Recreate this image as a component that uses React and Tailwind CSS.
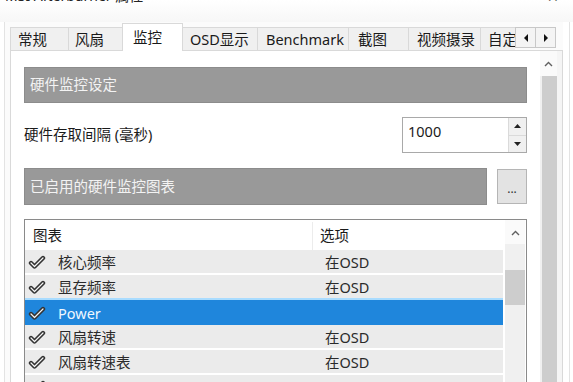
import React from "react";

function Check() {
  return (
    <svg width="18" height="15" viewBox="0 0 18 15" className="shrink-0">
      <path d="M3 8 L6.5 11.5 L15 3" fill="none" stroke="#333" strokeWidth="4.4" strokeLinecap="round" strokeLinejoin="round" />
      <path d="M3 8 L6.5 11.5 L15 3" fill="none" stroke="#f4f4f4" strokeWidth="1.2" strokeLinecap="round" strokeLinejoin="round" />
    </svg>
  );
}

function UpChevron() {
  return (
    <svg width="9" height="6" viewBox="0 0 9 6">
      <polyline points="1,5 4.5,1.5 8,5" fill="none" stroke="#606060" strokeWidth="1.4" />
    </svg>
  );
}

const tabs = [
  { t: "常规", w: "w-[59px]", p: "pl-[7px]" },
  { t: "风扇", w: "w-[55px]", p: "pl-[6px]" },
  { t: "监控", w: "w-[61px]", p: "pl-[10px]", sel: true },
  { t: "OSD显示", w: "w-[76px]", p: "pl-[7px]" },
  { t: "Benchmark", w: "w-[92px]", p: "pl-[8px]" },
  { t: "截图", w: "w-[61px]", p: "pl-[9px]" },
  { t: "视频摄录", w: "w-[73px]", p: "pl-[8px]" },
  { t: "自定义", w: "w-[60px]", p: "pl-[7px]" },
];

const rows = [
  { name: "核心频率", opt: "在OSD" },
  { name: "显存频率", opt: "在OSD" },
  { name: "Power", opt: "", sel: true },
  { name: "风扇转速", opt: "在OSD" },
  { name: "风扇转速表", opt: "在OSD" },
  { name: "", opt: "" },
];

export default function App() {
  return (
    <div className="w-[573px] h-[382px] overflow-hidden bg-white flex flex-col font-['Noto_Sans','Noto_Sans_CJK_SC',sans-serif] text-[#1a1a1a]">
      {/* title bar (cut off at top) */}
      <div className="h-[22px] shrink-0 flex justify-between bg-gradient-to-b from-white to-[#f7f7f7]">
        <div className="-mt-[12px] ml-[5px] text-[14px] leading-[16px] text-[#222]">MSI Afterburner 属性</div>
        <div className="-mt-[11px] mr-[14px] text-[14px] leading-[16px] text-[#333]">✕</div>
      </div>

      <div className="flex-1 flex min-h-0">
        <div className="ml-[4px] w-[6px] border-l border-[#e3e3e3] bg-[#fbfbfb]" />
        <div className="w-[553px] flex flex-col min-h-0">
          {/* tab strip */}
          <div className="h-[29px] shrink-0 flex items-end bg-[#fbfbfb]">
            <div className="w-[505px] h-full flex items-end overflow-hidden">
              {tabs.map((tab, i) =>
                tab.sel ? (
                  <div
                    key={i}
                    className={`${tab.w} ${tab.p} shrink-0 h-[28px] -ml-px bg-white border-x border-t border-[#d9d9d9] pt-[3px] text-[14.5px] leading-[20px] relative z-10`}
                  >
                    {tab.t}
                  </div>
                ) : (
                  <div
                    key={i}
                    className={`${tab.w} ${tab.p} shrink-0 h-[24px] ${i === 0 ? "" : "-ml-px"} bg-[#f0f0f0] border border-[#d9d9d9] pt-[1px] text-[14.5px] leading-[20px] whitespace-nowrap`}
                  >
                    {tab.t}
                  </div>
                )
              )}
            </div>
            <div className="flex-1 h-full border-b border-[#d9d9d9] flex items-start pt-[5px]">
              <div className="flex">
                <div className="w-[21px] h-[21px] bg-[#f4f4f4] border border-[#c8c8c8] flex items-center justify-center">
                  <svg width="6" height="8" viewBox="0 0 6 8"><polygon points="5,0 5,8 1,4" fill="#111" /></svg>
                </div>
                <div className="w-[21px] h-[21px] -ml-px bg-[#f4f4f4] border border-[#c8c8c8] flex items-center justify-center">
                  <svg width="6" height="8" viewBox="0 0 6 8"><polygon points="1,0 1,8 5,4" fill="#111" /></svg>
                </div>
              </div>
            </div>
          </div>

          {/* tab panel */}
          <div className="flex-1 min-h-0 flex border-x border-[#d9d9d9] bg-[#f5f5f5]">
            <div className="w-[529px] bg-white px-[13px] pt-[16px] flex flex-col min-h-0">
              <div className="h-[36px] shrink-0 bg-[#999999] border border-[#8c8c8c] flex items-center pl-[5px] text-[14.5px] text-[#f3f3f3]">
                硬件监控设定
              </div>

              <div className="mt-[14px] h-[36px] shrink-0 flex items-center justify-between">
                <div className="text-[14.5px]">硬件存取间隔 (毫秒)</div>
                <div className="w-[125px] h-[36px] border border-[#a9a9a9] flex bg-white">
                  <div className="flex-1 pl-[5px] pt-[3px] text-[14.5px] leading-[20px]">1000</div>
                  <div className="w-[18px] flex flex-col border-l border-[#dadada]">
                    <div className="flex-1 bg-[#f0f0f0] flex items-center justify-center border-b border-[#dadada]">
                      <svg width="7" height="4" viewBox="0 0 7 4"><polygon points="0,4 7,4 3.5,0" fill="#222" /></svg>
                    </div>
                    <div className="flex-1 bg-[#f0f0f0] flex items-center justify-center">
                      <svg width="7" height="4" viewBox="0 0 7 4"><polygon points="0,0 7,0 3.5,4" fill="#222" /></svg>
                    </div>
                  </div>
                </div>
              </div>

              <div className="mt-[15px] h-[37px] shrink-0 flex gap-[10px]">
                <div className="flex-1 bg-[#999999] border border-[#8c8c8c] flex items-center pl-[5px] text-[14.5px] text-[#f3f3f3]">
                  已启用的硬件监控图表
                </div>
                <div className="w-[30px] h-[35px] mt-[1px] bg-[#e3e3e3] border border-[#b5b5b5] flex items-end justify-center pb-[9px] text-[12px] leading-[10px] text-[#333]">
                  ...
                </div>
              </div>

              {/* list */}
              <div className="mt-[14px] flex-1 min-h-0 overflow-hidden border-x border-t border-[#8a8a8a] flex">
                <div className="w-[478px] flex flex-col">
                  <div className="h-[30px] shrink-0 flex items-center text-[14.5px] pt-[2px]">
                    <div className="w-[288px] h-full pl-[8px] flex items-center border-r border-[#ececec]">图表</div>
                    <div className="pl-[7px]">选项</div>
                  </div>
                  {rows.map((r, i) => (
                    <div key={i} className="h-[25px] shrink-0">
                      <div
                        className={
                          r.sel
                            ? "h-[27px] -mt-[2px] bg-[#1f86dc] border-t-2 border-[#a9dcff] flex items-center pt-[2px] text-[14.5px] text-[#eef7ff]"
                            : "h-[23px] bg-[#ebebeb] flex items-center pt-[2px] text-[14.5px] text-[#2a2a2a]"
                        }
                      >
                        <div className="w-[288px] flex items-center pl-[3px]">
                          <Check />
                          <span className="ml-[12px]">{r.name}</span>
                        </div>
                        <div className="pl-[12px]">{r.opt}</div>
                      </div>
                    </div>
                  ))}
                </div>
                <div className="ml-[2px] w-[20px] flex flex-col">
                  <div className="h-[24px] shrink-0 bg-[#fafafa] flex items-center justify-center pt-[2px]">
                    <UpChevron />
                  </div>
                  <div className="flex-1 bg-[#f0f0f0] pt-[26px]">
                    <div className="h-[35px] bg-[#cdcdcd]" />
                  </div>
                </div>
              </div>
            </div>

            {/* outer scrollbar */}
            <div className="w-[17px] flex flex-col">
              <div className="h-[25px] shrink-0 bg-[#fafafa] flex items-center justify-center">
                <UpChevron />
              </div>
              <div className="flex-1 bg-[#f0f0f0] pl-[2px]">
                <div className="h-full bg-[#cdcdcd]" />
              </div>
            </div>
          </div>
        </div>
        <div className="flex-1 border-r border-[#e3e3e3] mr-[3px] bg-white" />
      </div>
    </div>
  );
}
